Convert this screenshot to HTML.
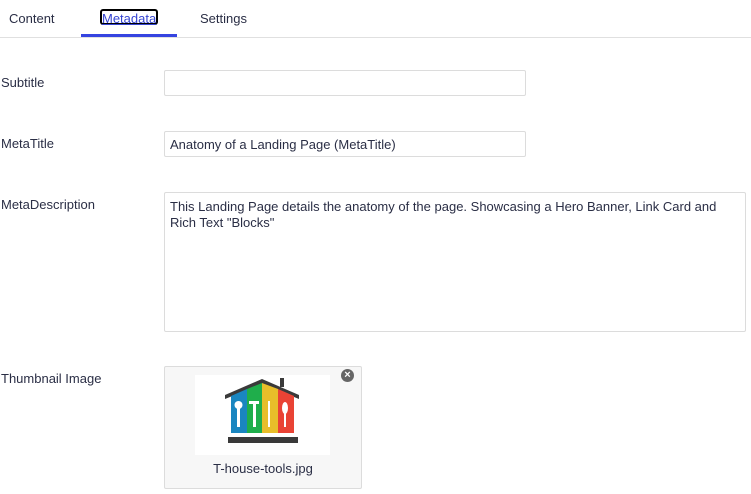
<!DOCTYPE html>
<html><head><style>
body{margin:0;width:751px;height:494px;background:#fff;font-family:"Liberation Sans",sans-serif;font-size:13px;color:#2a2e45;position:relative;overflow:hidden}
.a{position:absolute}
.inp{position:absolute;border:1px solid #dcdcdc;border-radius:2px;box-sizing:border-box;background:#fff}
</style></head><body>
<div class="a" style="left:0;top:37px;width:751px;height:1px;background:#e0e0e0"></div>
<div class="a" style="left:9px;top:11px">Content</div>
<div class="a" style="left:100px;top:9px;width:58px;height:16px;border:2px solid #000;border-radius:3px;box-sizing:border-box"></div>
<div class="a" style="left:102px;top:11px;color:#3544d1;text-decoration:underline">Metadata</div>
<div class="a" style="left:81px;top:34px;width:96px;height:3px;background:#3544e0"></div>
<div class="a" style="left:200px;top:11px">Settings</div>

<div class="a" style="left:1px;top:75px">Subtitle</div>
<div class="inp" style="left:164px;top:70px;width:362px;height:26px"></div>
<div class="a" style="left:1px;top:136px">MetaTitle</div>
<div class="inp" style="left:164px;top:131px;width:362px;height:26px"></div>
<div class="a" style="left:170px;top:137px">Anatomy of a Landing Page (MetaTitle)</div>
<div class="a" style="left:1px;top:197px">MetaDescription</div>
<div class="inp" style="left:164px;top:192px;width:582px;height:140px"></div>
<div class="a" style="left:170px;top:199px;width:570px;line-height:16px">This Landing Page details the anatomy of the page. Showcasing a Hero Banner, Link Card and Rich Text "Blocks"</div>
<div class="a" style="left:1px;top:371px">Thumbnail Image</div>
<div class="inp" style="left:164px;top:366px;width:198px;height:123px;background:#f7f7f7"></div>
<div class="a" style="left:195px;top:375px;width:135px;height:80px;background:#fff"></div>
<svg class="a" style="left:195px;top:375px" width="135" height="80">
<polygon points="30,20 67,4 104,20 104,24 67,9 30,24" fill="#3a3a3a"/>
<rect x="85" y="3" width="4" height="9" fill="#3a3a3a"/>
<polygon points="36,21 52,14 52,58 36,58" fill="#1a86c0"/>
<polygon points="52,14 67,8 67,58 52,58" fill="#1fae4b"/>
<polygon points="67,8 83,14 83,58 67,58" fill="#e8be2a"/>
<polygon points="83,14 99,21 99,58 83,58" fill="#e94335"/>
<g fill="#fff"><rect x="42" y="30" width="3" height="22"/><circle cx="43.5" cy="30" r="4"/>
<rect x="58" y="27" width="3" height="25"/><rect x="54" y="26" width="10" height="3"/>
<rect x="73" y="26" width="2" height="26"/>
<ellipse cx="90" cy="33" rx="3" ry="6"/><rect x="89" y="38" width="2" height="14"/></g>
<rect x="33" y="62" width="70" height="6" fill="#3a3a3a"/>
</svg>
<div class="a" style="left:341px;top:369px;width:13px;height:13px;border-radius:50%;background:#666;color:#fff;font-size:11px;line-height:13px;text-align:center;font-weight:bold">×</div>
<div class="a" style="left:164px;top:461px;width:198px;text-align:center">T-house-tools.jpg</div>
</body></html>
